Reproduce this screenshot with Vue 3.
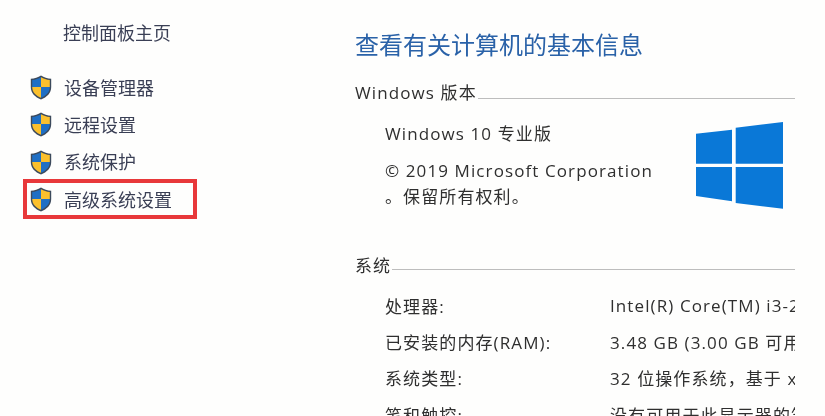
<script setup>
const links = ['设备管理器', '远程设置', '系统保护', '高级系统设置']
const specs = [
  { label: '处理器:', value: 'Intel(R) Core(TM) i3-2310M CPU @ 2.10GHz' },
  { label: '已安装的内存(RAM):', value: '3.48 GB (3.00 GB 可用)' },
  { label: '系统类型:', value: '32 位操作系统，基于 x64 的处理器' },
  { label: '笔和触控:', value: '没有可用于此显示器的笔或触控输入' }
]
</script>

<template>
  <div class="page">
    <aside class="sidebar">
      <div class="home">控制面板主页</div>
      <ul class="links">
        <li v-for="(link, i) in links" :key="link" class="link" :class="{ marked: i === 3 }">
          <svg class="shield" viewBox="0 0 22 25" width="22" height="25">
            <path d="M11 0.5C8 2.6 4.6 3.6 0.8 3.8V12C0.8 18 5 22.2 11 24.5C17 22.2 21.2 18 21.2 12V3.8C17.4 3.6 14 2.6 11 0.5Z" fill="#3c4a5c" />
            <path d="M11 2.2V12H2.2V4.9C5.4 4.7 8.4 3.8 11 2.2Z" fill="#1f6fc4" />
            <path d="M11 2.2V12H19.8V4.9C16.6 4.7 13.6 3.8 11 2.2Z" fill="#fbc02d" />
            <path d="M2.2 12H11V22.8C5.8 20.8 2.2 17.2 2.2 12Z" fill="#fbc02d" />
            <path d="M19.8 12H11V22.8C16.2 20.8 19.8 17.2 19.8 12Z" fill="#1f6fc4" />
          </svg>
          <span>{{ link }}</span>
        </li>
      </ul>
    </aside>

    <main class="content">
      <h1>查看有关计算机的基本信息</h1>

      <div class="section-title"><span>Windows 版本</span><i></i></div>
      <div class="edition">
        <div class="edition-text">
          <div class="name">Windows 10 专业版</div>
          <div class="copy">© 2019 Microsoft Corporation</div>
          <div class="rights">。保留所有权利。</div>
        </div>
        <svg class="logo" viewBox="0 0 87 87" width="87" height="87">
          <path d="M0 11.7L36 7.7V41.7H0Z" fill="#0a78d7" />
          <path d="M39.7 5.7L87 0V41.7H39.7Z" fill="#0a78d7" />
          <path d="M0 45H36V79.3L0 74Z" fill="#0a78d7" />
          <path d="M39.7 45H87V86.7L39.7 81Z" fill="#0a78d7" />
        </svg>
      </div>

      <div class="section-title system"><span>系统</span><i></i></div>
      <div class="specs">
        <div v-for="row in specs" :key="row.label" class="spec">
          <span class="label">{{ row.label }}</span>
          <span class="value">{{ row.value }}</span>
        </div>
      </div>
    </main>
  </div>
</template>

<style>
html, body {
  margin: 0;
  background: #fefefd;
}
</style>

<style scoped>
.page {
  display: flex;
  width: 825px;
  height: 416px;
  overflow: hidden;
  background: #fefefd;
  font-family: "Open Sans", "Noto Sans CJK SC", sans-serif;
  color: #2f2f2f;
  filter: blur(0.45px);
}

.sidebar {
  width: 355px;
  flex-shrink: 0;
  padding: 20px 0 0 30px;
  box-sizing: border-box;
  color: #3a3f55;
  font-size: 18px;
  line-height: 26px;
}

.home {
  padding-left: 33px;
}

.links {
  list-style: none;
  margin: 23px 0 0;
  padding: 0;
}

.link {
  display: flex;
  align-items: center;
  gap: 12px;
  height: 37.3px;
  position: relative;
}

.marked::after {
  content: "";
  position: absolute;
  left: -7px;
  top: -2px;
  width: 174px;
  height: 40px;
  box-sizing: border-box;
  border: 4px solid #e8383a;
}

.content {
  width: 440px;
  flex-shrink: 0;
  overflow: hidden;
  font-size: 17px;
  letter-spacing: 1.1px;
}

h1 {
  margin: 30px 0 0;
  font-size: 24px;
  line-height: 30px;
  font-weight: 400;
  letter-spacing: 0;
  color: #2a62a8;
}

.section-title {
  display: flex;
  margin-top: 20px;
  line-height: 26px;
}

.section-title span {
  white-space: nowrap;
}

.section-title i {
  flex: 1;
  height: 1px;
  background: #bdbdbd;
  margin: 18px 0 0 1px;
}

.edition {
  display: flex;
  justify-content: space-between;
  padding: 12px 12px 0 30px;
  height: 106px;
}

.name {
  line-height: 26px;
  margin-top: 3px;
}

.copy {
  line-height: 26px;
  margin-top: 11px;
}

.rights {
  line-height: 26px;
}

.logo {
  margin-top: 4px;
}

.section-title.system {
  margin-top: 29px;
}

.section-title.system i {
  margin-top: 16px;
}

.specs {
  padding: 8px 0 0 30px;
}

.spec {
  display: flex;
  height: 36.3px;
  align-items: center;
  white-space: nowrap;
}

.label {
  width: 225px;
  flex-shrink: 0;
}
</style>
